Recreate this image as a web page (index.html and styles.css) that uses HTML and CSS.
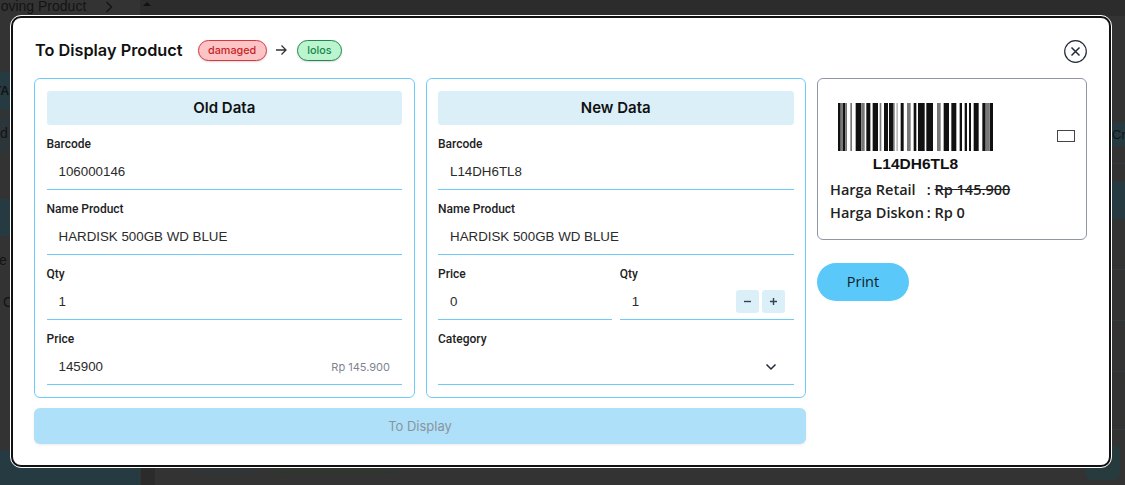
FILE: index.html
```html
<!DOCTYPE html>
<html lang="en">

<head>
    <meta charset="UTF-8">
    <title>To Display Product</title>
    <link rel="stylesheet" href="styles.css">
</head>

<body>
    <!-- dimmed page behind the modal -->
    <div class="backdrop">
        <div class="bg-top"></div>
        <span class="bg-crumb">Moving Product</span>
        <svg class="bg-chevron" width="8" height="12" viewBox="0 0 8 12" fill="none" stroke="#141414" stroke-width="1.300"><path d="M1.500 1 6.500 6l-5 5" /></svg>
        <span class="bg-sort"></span>
        <div class="bg-left-row bg-row-1">TA</div>
        <div class="bg-left-row bg-row-2">d</div>
        <div class="bg-left-row bg-row-3"></div>
        <span class="bg-left-text bg-text-1">e (</span>
        <span class="bg-left-text bg-text-2">C</span>
        <div class="bg-right-row">Cre</div>
        <div class="bg-right-dark"></div>
        <div class="bg-right-line bg-line-1"></div>
        <div class="bg-right-line bg-line-2"></div>
        <div class="bg-right-line bg-line-3"></div>
        <div class="bg-right-line bg-line-4"></div>
        <div class="bg-right-line bg-line-5"></div>
        <div class="bg-left-foot"></div>
        <div class="bg-foot-col"></div>
        <div class="bg-pill bg-pill-blue"></div>
        <div class="bg-pill bg-pill-green"></div>
        <div class="bg-right-foot"></div>
    </div>

    <div class="modal">
        <div class="modal-head">
            <h1>To Display Product</h1>
            <span class="badge badge-red">damaged</span>
            <svg class="arrow" width="14" height="14" viewBox="0 0 14 14" fill="none" stroke="#333" stroke-width="1.3">
                <path d="M2 7h10M7.5 2.5 12 7l-4.500 4.500" />
            </svg>
            <span class="badge badge-green">lolos</span>
            <button class="close">
                <svg width="23" height="23" viewBox="0 0 23 23" fill="none" stroke="#1f2937">
                    <circle cx="11.500" cy="11.500" r="10.800" stroke-width="1.200" />
                    <path d="M7.500 7.500l8 8M15.500 7.500l-8 8" stroke-width="1.500" />
                </svg>
            </button>
        </div>

        <div class="modal-body">
            <div class="forms">
                <div class="form-cols">
                    <section class="panel">
                        <h2>Old Data</h2>
                        <div class="field">
                            <label>Barcode</label>
                            <div class="input">106000146</div>
                        </div>
                        <div class="field">
                            <label>Name Product</label>
                            <div class="input">HARDISK 500GB WD BLUE</div>
                        </div>
                        <div class="field">
                            <label>Qty</label>
                            <div class="input">1</div>
                        </div>
                        <div class="field">
                            <label>Price</label>
                            <div class="input">145900<span class="hint">Rp 145.900</span></div>
                        </div>
                    </section>

                    <section class="panel">
                        <h2>New Data</h2>
                        <div class="field">
                            <label>Barcode</label>
                            <div class="input">L14DH6TL8</div>
                        </div>
                        <div class="field">
                            <label>Name Product</label>
                            <div class="input">HARDISK 500GB WD BLUE</div>
                        </div>
                        <div class="field-row">
                            <div class="field">
                                <label>Price</label>
                                <div class="input">0</div>
                            </div>
                            <div class="field">
                                <label>Qty</label>
                                <div class="input">1
                                    <span class="steppers">
                                        <span class="step">
                                            <svg width="9" height="9" viewBox="0 0 9 9" stroke="#374151" stroke-width="1.400"><path d="M1 4.500h7" /></svg>
                                        </span>
                                        <span class="step">
                                            <svg width="9" height="9" viewBox="0 0 9 9" stroke="#374151" stroke-width="1.400"><path d="M1 4.500h7M4.500 1v7" /></svg>
                                        </span>
                                    </span>
                                </div>
                            </div>
                        </div>
                        <div class="field">
                            <label>Category</label>
                            <div class="input input-select">
                                <svg width="12" height="8" viewBox="0 0 12 8" fill="none" stroke="#1f2937" stroke-width="1.500"><path d="M1.500 1.500 6 6l4.500-4.500" /></svg>
                            </div>
                        </div>
                    </section>
                </div>
                <button class="submit">To Display</button>
            </div>

            <aside class="side">
                <div class="label-card">
                    <div class="label-top">
                        <div class="barcode">
                            <svg width="155" height="48" viewBox="0 0 465 48" preserveAspectRatio="none">
                                <g fill="#111">
                                    <rect x="0" width="8" height="48" />
                                    <rect x="15" width="7" height="48" />
                                    <rect x="53" width="7" height="48" />
                                    <rect x="60" width="10" height="48" />
                                    <rect x="85" width="12" height="48" />
                                    <rect x="104" width="16" height="48" />
                                    <rect x="138" width="12" height="48" />
                                    <rect x="153" width="12" height="48" />
                                    <rect x="188" width="9" height="48" />
                                    <rect x="227" width="8" height="48" />
                                    <rect x="240" width="20" height="48" />
                                    <rect x="265" width="20" height="48" />
                                    <rect x="317" width="16" height="48" />
                                    <rect x="340" width="15" height="48" />
                                    <rect x="365" width="7" height="48" />
                                    <rect x="380" width="7" height="48" />
                                    <rect x="393" width="6" height="48" />
                                    <rect x="407" width="15" height="48" />
                                    <rect x="433" width="10" height="48" />
                                    <rect x="455" width="10" height="48" />
                                </g>
                                <g fill="#777">
                                    <rect x="8" width="7" height="48" />
                                    <rect x="22" width="5" height="48" />
                                    <rect x="37" width="5" height="48" />
                                    <rect x="70" width="10" height="48" />
                                    <rect x="125" width="5" height="48" />
                                    <rect x="165" width="5" height="48" />
                                    <rect x="207" width="11" height="48" />
                                    <rect x="297" width="11" height="48" />
                                    <rect x="443" width="12" height="48" />
                                </g>
                                <rect x="175" width="5" height="48" fill="#bbb" />
                            </svg>
                            <div class="barcode-text">L14DH6TL8</div>
                        </div>
                        <span class="check"></span>
                    </div>
                    <div class="price-line"><span class="price-key">Harga Retail</span> : <s>Rp 145.900</s></div>
                    <div class="price-line"><span class="price-key">Harga Diskon</span> : Rp 0</div>
                </div>
                <button class="print">Print</button>
            </aside>
        </div>
    </div>
</body>

</html>
```

FILE: styles.css
```css
* {
    box-sizing: border-box;
}

body {
    margin: 0;
    height: 485px;
    overflow: hidden;
    background-color: #333;
    font-family: 'Inter', 'Liberation Sans', sans-serif;
    color: #1c1c1c;
}

.backdrop {
    position: absolute;
    inset: 0;
    overflow: hidden;
    color: #141414;
    font-family: 'Liberation Sans', sans-serif;
    font-size: 14px;
}

.bg-top {
    position: absolute;
    left: 140px;
    top: 0;
    right: 0;
    height: 16px;
    background-color: #2c2c2c;
}

.bg-crumb {
    position: absolute;
    left: -11px;
    top: -2px;
}

.bg-chevron {
    position: absolute;
    left: 105px;
    top: 1px;
}

.bg-sort {
    position: absolute;
    left: 143px;
    top: 2px;
    border-left: 4px solid transparent;
    border-right: 4px solid transparent;
    border-bottom: 4px solid #111;
}

.bg-left-row {
    position: absolute;
    left: 0;
    width: 10px;
    background-color: #253a41;
    white-space: nowrap;
    overflow: hidden;
}

.bg-row-1 {
    top: 72px;
    height: 38px;
    padding-top: 12px;
    font-size: 12px;
    font-weight: 700;
    text-indent: -6px;
}

.bg-row-2 {
    top: 115px;
    height: 37px;
    padding-top: 10px;
    background-color: #2c353a;
}

.bg-row-3 {
    top: 199px;
    height: 37px;
}

.bg-left-text {
    position: absolute;
    left: -1px;
    width: 11px;
    overflow: hidden;
    white-space: nowrap;
}

.bg-text-1 {
    top: 252px;
}

.bg-text-2 {
    top: 294px;
    left: 3px;
    width: 7px;
}

.bg-right-row {
    position: absolute;
    right: 0;
    top: 123px;
    width: 13px;
    height: 23px;
    padding-top: 4px;
    background-color: #253a41;
    font-size: 13px;
    overflow: hidden;
}

.bg-right-dark {
    position: absolute;
    right: 0;
    top: 182px;
    width: 13px;
    height: 37px;
    background-color: #253a41;
}

.bg-right-line {
    position: absolute;
    right: 0;
    width: 13px;
    height: 1px;
    background-color: #2d3d42;
}

.bg-line-1 {
    top: 163px;
}

.bg-line-2 {
    top: 269px;
}

.bg-line-3 {
    top: 320px;
}

.bg-line-4 {
    top: 371px;
}

.bg-line-5 {
    top: 429px;
}

.bg-left-foot {
    position: absolute;
    left: 0;
    top: 450px;
    width: 140px;
    height: 35px;
    background-color: #253a41;
}

.bg-foot-col {
    position: absolute;
    left: 141px;
    top: 468px;
    width: 14px;
    height: 17px;
    background-color: #2b2b2b;
}

.bg-right-foot {
    position: absolute;
    left: 1086px;
    top: 445px;
    width: 34px;
    height: 35px;
    border-radius: 6px;
    background-color: #273a3e;
}

.bg-pill {
    position: absolute;
    top: 460px;
    height: 14px;
    border-radius: 0 0 12px 12px;
    border: 1px solid;
}

.bg-pill-blue {
    left: 192px;
    width: 65px;
    border-color: #1d3a45;
}

.bg-pill-green {
    left: 272px;
    width: 126px;
    border-color: #233c27;
}

.modal {
    position: absolute;
    left: 11px;
    top: 16px;
    width: 1100px;
    height: 451px;
    background-color: #fff;
    border: 2px solid #111;
    border-radius: 10px;
    outline: 1px solid #fff;
    padding: 0 21px;
}

.modal-head {
    display: flex;
    align-items: center;
    height: 60px;
    padding-top: 4px;
}

h1 {
    margin: 0 15px 0 1px;
    font-size: 16.300px;
    font-weight: 600;
    color: #111;
}

.badge {
    height: 21px;
    line-height: 19px;
    padding: 0 9.500px;
    border-radius: 11px;
    border: 1px solid;
    font-size: 10.800px;
    font-weight: 500;
    box-shadow: 0 1px 2px rgba(0, 0, 0, 0.15);
}

.badge-red {
    background-color: #fcc4c4;
    border-color: #d9363e;
    color: #c81e28;
}

.badge-green {
    background-color: #bbf5cf;
    border-color: #1f8a4c;
    color: #17874a;
}

.arrow {
    margin: 0 9px 0 7px;
}

.close {
    margin-left: auto;
    margin-right: 1px;
    margin-top: 2px;
    padding: 0;
    border: none;
    background: none;
    display: flex;
}

.modal-body {
    display: flex;
    gap: 11px;
}

.forms {
    width: 772px;
}

.form-cols {
    display: flex;
    gap: 11px;
}

.panel {
    flex: 1;
    height: 320px;
    border: 1.500px solid #6ecbf8;
    border-radius: 6px;
    padding: 11.500px;
}

.panel h2 {
    margin: 0 0 9px;
    height: 34px;
    line-height: 34px;
    text-align: center;
    font-size: 15px;
    font-weight: 600;
    color: #111;
    background-color: #dbeff9;
    border-radius: 3px;
}

.field {
    flex: 1;
    min-width: 0;
    height: 65px;
}

.field label {
    display: block;
    height: 20px;
    line-height: 20px;
    font-family: 'Roboto', sans-serif;
    font-size: 12px;
    font-weight: 500;
    color: #222;
}

.field-row {
    display: flex;
    gap: 8px;
}

.input {
    display: flex;
    align-items: center;
    height: 36px;
    padding: 1px 12px 0;
    font-family: 'Liberation Sans', sans-serif;
    font-size: 13.330px;
    color: #2b2b2b;
    border-bottom: 1px solid #6ecbf8;
}

.hint {
    margin-left: auto;
    font-family: 'Inter', sans-serif;
    font-size: 11px;
    color: #7d8590;
}

.steppers {
    display: flex;
    gap: 3px;
    margin-left: auto;
    margin-right: -3px;
}

.step {
    display: flex;
    align-items: center;
    justify-content: center;
    width: 23px;
    height: 23px;
    margin-top: -1px;
    border-radius: 3px;
    background-color: #dbeff9;
}

.input-select {
    justify-content: flex-end;
    padding-right: 17px;
}

.submit {
    display: block;
    width: 100%;
    height: 36px;
    margin-top: 10px;
    border: none;
    border-radius: 6px;
    background-color: #aee0fa;
    color: #8a949c;
    font-family: inherit;
    font-size: 13px;
    box-shadow: 0 1px 3px rgba(0, 0, 0, 0.08);
}

.side {
    width: 270px;
}

.label-card {
    height: 162px;
    border: 1px solid #8f95a3;
    border-radius: 6px;
    padding: 24px 11px 0 12px;
    font-family: 'Open Sans', sans-serif;
}

.label-top {
    display: flex;
    align-items: flex-start;
    justify-content: space-between;
    padding-left: 8px;
    height: 69px;
}

.barcode svg {
    display: block;
}

.barcode-text {
    margin-top: 4px;
    text-align: center;
    font-family: 'Liberation Sans', sans-serif;
    font-size: 15.500px;
    font-weight: 700;
    line-height: 17px;
    color: #111;
}

.check {
    width: 18px;
    height: 12px;
    margin-top: 27px;
    border: 1px solid #444;
}

.price-line {
    height: 23px;
    line-height: 22px;
    font-size: 14.500px;
    font-weight: 600;
    color: #222;
    white-space: pre;
}

.label-top + .price-line {
    margin-top: 7px;
}

.price-key {
    display: inline-block;
    width: 93px;
}

.print {
    display: block;
    width: 92px;
    height: 38px;
    margin-top: 23px;
    padding-bottom: 3px;
    border: none;
    border-radius: 19px;
    background-color: #5ac8f8;
    color: #111d28;
    font-family: 'Open Sans', sans-serif;
    font-size: 14.500px;
}
```
